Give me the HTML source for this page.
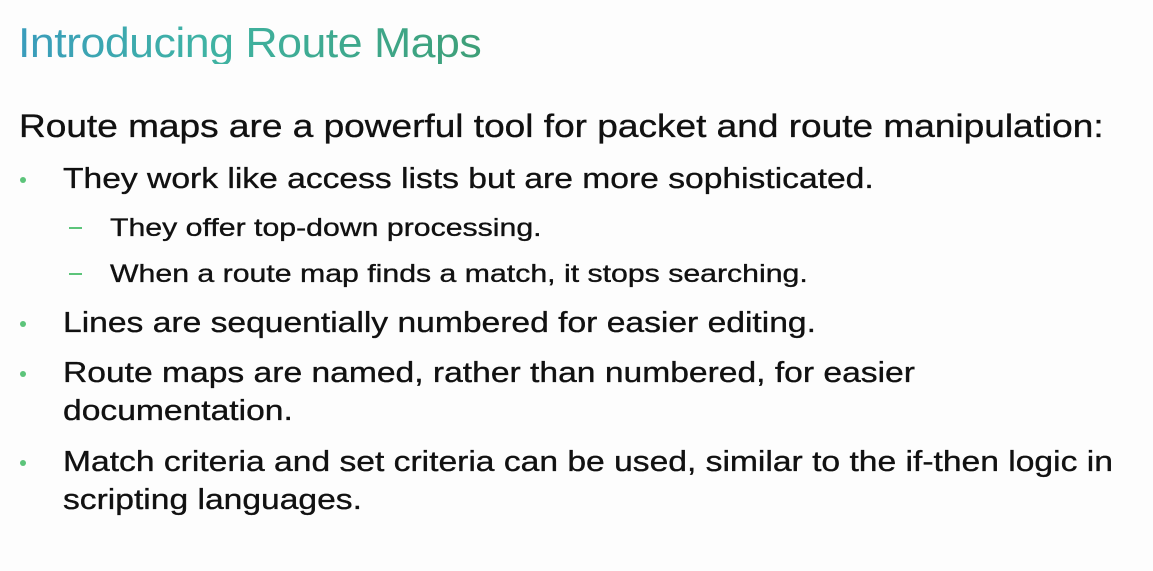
<!DOCTYPE html>
<html><head><meta charset="utf-8"><style>
body{margin:0;width:1153px;height:571px;background:#fdfdfd;overflow:hidden;position:relative;font-family:"Liberation Sans",Arial,sans-serif;color:#111}
.l{position:absolute;white-space:nowrap;line-height:1;transform-origin:0 0}
.t{font-size:42px;left:18px;top:22px;background:linear-gradient(90deg,#3a9cbc,#3fb3a4 40%,#3e9f78);-webkit-background-clip:text;background-clip:text;color:transparent;letter-spacing:-0.5px;transform:scaleX(1.065)}
.m,.b,.s{-webkit-text-stroke:0.35px #111}
.m{font-size:32px;left:19px;transform:scaleX(1.157)}
.b{font-size:29px;left:63px;transform:scaleX(1.159)}
.s{font-size:25px;left:110px;transform:scaleX(1.21)}
.dot{position:absolute;width:6px;height:6px;border-radius:50%;background:#5cc47a}
.dash{position:absolute;width:13px;height:2px;background:#5cc47a}
</style></head><body>
<div class="l t">Introducing Route Maps</div>
<div class="l m" style="top:110px">Route maps are a powerful tool for packet and route manipulation:</div>
<div class="dot" style="left:20px;top:177px"></div>
<div class="l b" style="top:165px">They work like access lists but are more sophisticated.</div>
<div class="dash" style="left:69px;top:227px"></div>
<div class="l s" style="top:216px">They offer top-down processing.</div>
<div class="dash" style="left:69px;top:273px"></div>
<div class="l s" style="top:262px">When a route map finds a match, it stops searching.</div>
<div class="dot" style="left:20px;top:321px"></div>
<div class="l b" style="top:309px">Lines are sequentially numbered for easier editing.</div>
<div class="dot" style="left:20px;top:371px"></div>
<div class="l b" style="top:359px">Route maps are named, rather than numbered, for easier</div>
<div class="l b" style="top:397px">documentation.</div>
<div class="dot" style="left:20px;top:460px"></div>
<div class="l b" style="top:448px">Match criteria and set criteria can be used, similar to the if-then logic in</div>
<div class="l b" style="top:486px">scripting languages.</div>
</body></html>
